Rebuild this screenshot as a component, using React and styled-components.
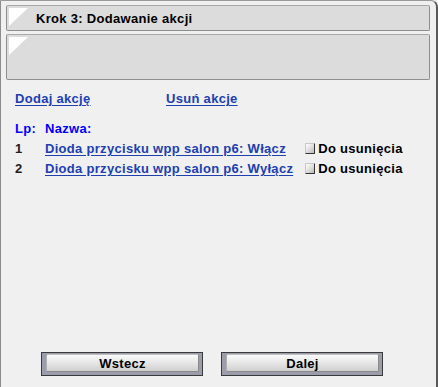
import React from 'react';
import styled, { createGlobalStyle } from 'styled-components';

const GlobalStyle = createGlobalStyle`
    html, body {
        margin: 0;
        padding: 0;
        background: #f0f0f0;
    }
    body {
        font-family: "Liberation Sans", Arial, sans-serif;
        font-size: 13px;
    }
`;

const Frame = styled.div`
    box-sizing: border-box;
    width: 438px;
    height: 387px;
    display: flex;
    flex-direction: column;
    background: #f0f0f0;
    border-left: 1px solid #8c8c8c;
    border-top: 1px solid #9a9a9a;
    border-right: 2px solid #5a5a5a;
    border-top-right-radius: 7px;
    padding: 4px 6px 0 5px;
`;

const Panel = styled.div`
    position: relative;
    box-sizing: border-box;
    height: ${p => p.$height}px;
    margin-bottom: 3px;
    background: #dcdcdc;
    border: 1px solid #8e8e8e;
    border-top-color: #a8a8a8;
    border-radius: 2px;
    display: flex;
    align-items: center;
    padding-left: 29px;

    &::before {
        content: "";
        position: absolute;
        left: 2px;
        top: 2px;
        width: 19px;
        height: 18px;
        background: #ffffff;
        clip-path: polygon(0 0, 100% 0, 0 100%);
    }
`;

const PanelTitle = styled.span`
    font-weight: bold;
    font-size: 13px;
    letter-spacing: 0.3px;
    color: #000;
    margin-top: 1px;
`;

const Body = styled.div`
    display: flex;
    flex-direction: column;
    padding: 8px 0 0 9px;
    flex: 1;
`;

const Actions = styled.div`
    display: flex;
`;

const Link = styled.a`
    font-weight: bold;
    color: #2040b0;
    text-decoration: underline;
    text-underline-offset: 2px;
    cursor: pointer;
    line-height: 15px;
    letter-spacing: 0.3px;
    width: ${p => p.$width || 'auto'};
    white-space: nowrap;
`;

const Table = styled.div`
    display: grid;
    grid-template-columns: 30px auto auto 1fr;
    row-gap: 5px;
    margin-top: 15px;
    font-weight: bold;
    line-height: 15px;
    letter-spacing: 0.3px;
    align-items: center;
`;

const HeadCell = styled.span`
    color: #0000ff;
`;

const Num = styled.span`
    color: #202020;
`;

const Check = styled.span`
    display: flex;
    align-items: center;
    gap: 3px;
    margin-left: 12px;
    color: #000;
    white-space: nowrap;
`;

const Box = styled.span`
    display: inline-block;
    box-sizing: border-box;
    width: 10px;
    height: 11px;
    background: linear-gradient(135deg, #ffffff 0%, #d8d8d8 60%, #b8b8b8 100%);
    border-right: 1px solid #333;
    border-bottom: 1px solid #333;
    border-top: 1px solid #c8c8c8;
    border-left: 1px solid #c8c8c8;
    border-radius: 1px;
`;

const Footer = styled.div`
    display: flex;
    gap: 18px;
    padding: 0 0 11px 35px;
`;

const Button = styled.button`
    box-sizing: border-box;
    width: 162px;
    height: 24px;
    padding: 1px 3px 3px 4px;
    background: #9b9dad;
    border: 1px solid #3a3a3a;
    cursor: pointer;
    display: flex;

    span {
        flex: 1;
        display: flex;
        align-items: center;
        justify-content: center;
        border: 1px solid #8a8a8a;
        border-top-color: #c0c0c0;
        border-left-color: #b0b0b0;
        border-radius: 2px;
        background: linear-gradient(#fbfbfb, #e6e6e6 50%, #cfcfcf);
        font-family: "Liberation Sans", Arial, sans-serif;
        font-weight: bold;
        font-size: 13px;
        letter-spacing: 0.3px;
        color: #000;
    }
`;

const rows = [
    { id: 1, name: 'Dioda przycisku wpp salon p6: Włącz' },
    { id: 2, name: 'Dioda przycisku wpp salon p6: Wyłącz' },
];

function App() {
    return (
        <>
            <GlobalStyle />
            <Frame>
                <Panel $height={26}>
                    <PanelTitle>Krok 3: Dodawanie akcji</PanelTitle>
                </Panel>
                <Panel $height={46} />
                <Body>
                    <Actions>
                        <Link $width="151px">Dodaj akcję</Link>
                        <Link>Usuń akcje</Link>
                    </Actions>
                    <Table>
                        <HeadCell>Lp:</HeadCell>
                        <HeadCell>Nazwa:</HeadCell>
                        <span />
                        <span />
                        {rows.map(r => (
                            <React.Fragment key={r.id}>
                                <Num>{r.id}</Num>
                                <Link>{r.name}</Link>
                                <Check><Box />Do usunięcia</Check>
                                <span />
                            </React.Fragment>
                        ))}
                    </Table>
                </Body>
                <Footer>
                    <Button><span>Wstecz</span></Button>
                    <Button><span>Dalej</span></Button>
                </Footer>
            </Frame>
        </>
    );
}

export default App;
